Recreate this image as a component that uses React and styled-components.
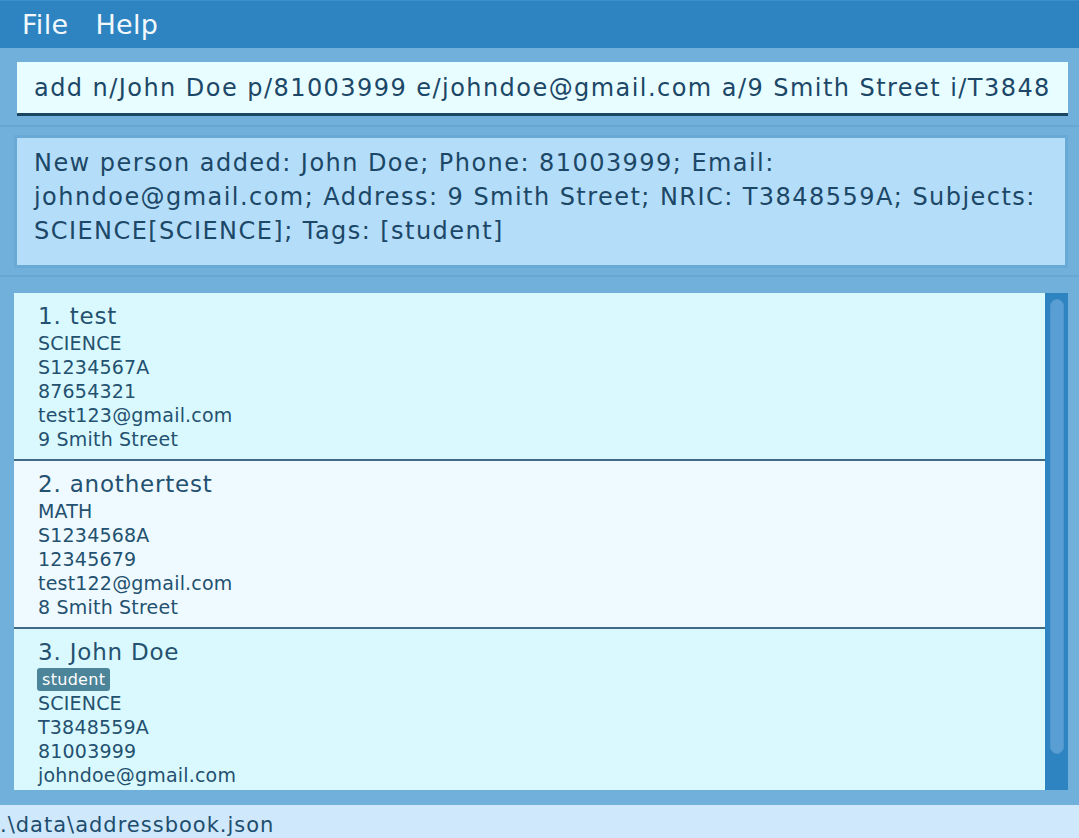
import React from 'react';
import styled, { createGlobalStyle } from 'styled-components';

const GlobalStyle = createGlobalStyle`
    html, body {
        margin: 0;
        padding: 0;
        height: 100%;
        overflow: hidden;
    }
    body {
        font-family: "DejaVu Sans", Verdana, sans-serif;
        background-color: #72b0dc;
    }
    #root {
        height: 100%;
    }
`;

const persons = [
    {
        name: 'test',
        tags: [],
        subject: 'SCIENCE',
        nric: 'S1234567A',
        phone: '87654321',
        email: 'test123@gmail.com',
        address: '9 Smith Street',
    },
    {
        name: 'anothertest',
        tags: [],
        subject: 'MATH',
        nric: 'S1234568A',
        phone: '12345679',
        email: 'test122@gmail.com',
        address: '8 Smith Street',
    },
    {
        name: 'John Doe',
        tags: ['student'],
        subject: 'SCIENCE',
        nric: 'T3848559A',
        phone: '81003999',
        email: 'johndoe@gmail.com',
        address: '9 Smith Street',
    },
];

const App = () => {
    return (
        <>
            <GlobalStyle />
            <Window>
                <MenuBar>
                    <MenuItem>File</MenuItem>
                    <MenuItem>Help</MenuItem>
                </MenuBar>

                <CommandPane>
                    <CommandBox>
                        add n/John Doe p/81003999 e/johndoe@gmail.com a/9 Smith Street i/T3848
                    </CommandBox>
                </CommandPane>

                <ResultPane>
                    <ResultBox>
                        New person added: John Doe; Phone: 81003999; Email: johndoe@gmail.com; Address: 9 Smith Street; NRIC: T3848559A; Subjects: SCIENCE[SCIENCE]; Tags: [student]
                    </ResultBox>
                </ResultPane>

                <ListPane>
                    <PersonList>
                        {persons.map((p, i) => (
                            <Card key={p.name} $odd={i % 2 === 1}>
                                <Name>{i + 1}. {p.name}</Name>
                                {p.tags.length > 0 && (
                                    <TagRow>
                                        {p.tags.map(t => <Tag key={t}>{t}</Tag>)}
                                    </TagRow>
                                )}
                                <Detail>{p.subject}</Detail>
                                <Detail>{p.nric}</Detail>
                                <Detail>{p.phone}</Detail>
                                <Detail>{p.email}</Detail>
                                <Detail>{p.address}</Detail>
                            </Card>
                        ))}
                    </PersonList>
                    <ScrollTrack>
                        <ScrollThumb />
                    </ScrollTrack>
                </ListPane>

                <StatusBar>.\data\addressbook.json</StatusBar>
            </Window>
        </>
    );
};

const Window = styled.div`
    height: 100%;
    display: flex;
    flex-direction: column;
    background-color: #72b0dc;
`;

const MenuBar = styled.div`
    height: 48px;
    flex-shrink: 0;
    display: flex;
    align-items: center;
    padding-left: 10px;
    background-color: #2d84c1;
    border-top: 1px solid #3b8fca;
    box-sizing: border-box;
`;

const MenuItem = styled.span`
    color: #f2f8fc;
    font-size: 27px;
    letter-spacing: 0.3px;
    padding: 0 12px;
    margin-right: 3px;
`;

const CommandPane = styled.div`
    flex-shrink: 0;
    padding: 14px 11px 9px 17px;
    border-bottom: 2px solid #68a7d4;
`;

const CommandBox = styled.div`
    height: 51px;
    display: flex;
    align-items: center;
    padding-left: 17px;
    background-color: #e8fdff;
    border-bottom: 3px solid #1b4663;
    color: #1c4767;
    font-size: 24px;
    letter-spacing: 1.45px;
    white-space: nowrap;
    overflow: hidden;
`;

const ResultPane = styled.div`
    flex-shrink: 0;
    padding: 8px 11px 7px 14px;
    border-bottom: 2px solid #68a7d4;
`;

const ResultBox = styled.div`
    border: 3px solid #69a9d6;
    background-color: #b3ddf8;
    padding: 8px 10px 0 17px;
    box-sizing: border-box;
    height: 133px;
    color: #1c4767;
    font-size: 24px;
    letter-spacing: 1.45px;
    line-height: 34px;
`;

const ListPane = styled.div`
    flex: 1;
    min-height: 0;
    display: flex;
    padding: 16px 11px 15px 14px;
`;

const PersonList = styled.div`
    flex: 1;
    overflow: hidden;
`;

const ScrollTrack = styled.div`
    width: 23px;
    flex-shrink: 0;
    background-color: #2e83c1;
    padding: 6px 4px 0 5px;
    box-sizing: border-box;
`;

const ScrollThumb = styled.div`
    height: 455px;
    background-color: #5a9fd3;
    border: 1px solid #5097cd;
    box-sizing: border-box;
    border-radius: 7px;
`;

const Card = styled.div`
    padding: 8px 24px 8px;
    background-color: ${props => props.$odd ? '#eefaff' : '#daf9ff'};
    border-bottom: 2px solid #3f6984;
    color: #24516f;
`;

const Name = styled.div`
    font-size: 23px;
    letter-spacing: 0.8px;
    line-height: 30px;
`;

const Detail = styled.div`
    font-size: 19px;
    letter-spacing: 0.2px;
    line-height: 24px;
`;

const TagRow = styled.div`
    height: 24px;
    display: flex;
    align-items: center;
`;

const Tag = styled.span`
    background-color: #4c8499;
    color: #ffffff;
    font-size: 16px;
    letter-spacing: 0.3px;
    line-height: 23px;
    padding: 0 5px;
    margin-left: -1px;
    border-radius: 3px;
`;

const StatusBar = styled.div`
    height: 33px;
    flex-shrink: 0;
    background-color: #cfe8fb;
    color: #1d4d6e;
    font-size: 21px;
    letter-spacing: 1px;
    line-height: 40px;
    overflow: hidden;
    white-space: nowrap;
`;

export default App;
